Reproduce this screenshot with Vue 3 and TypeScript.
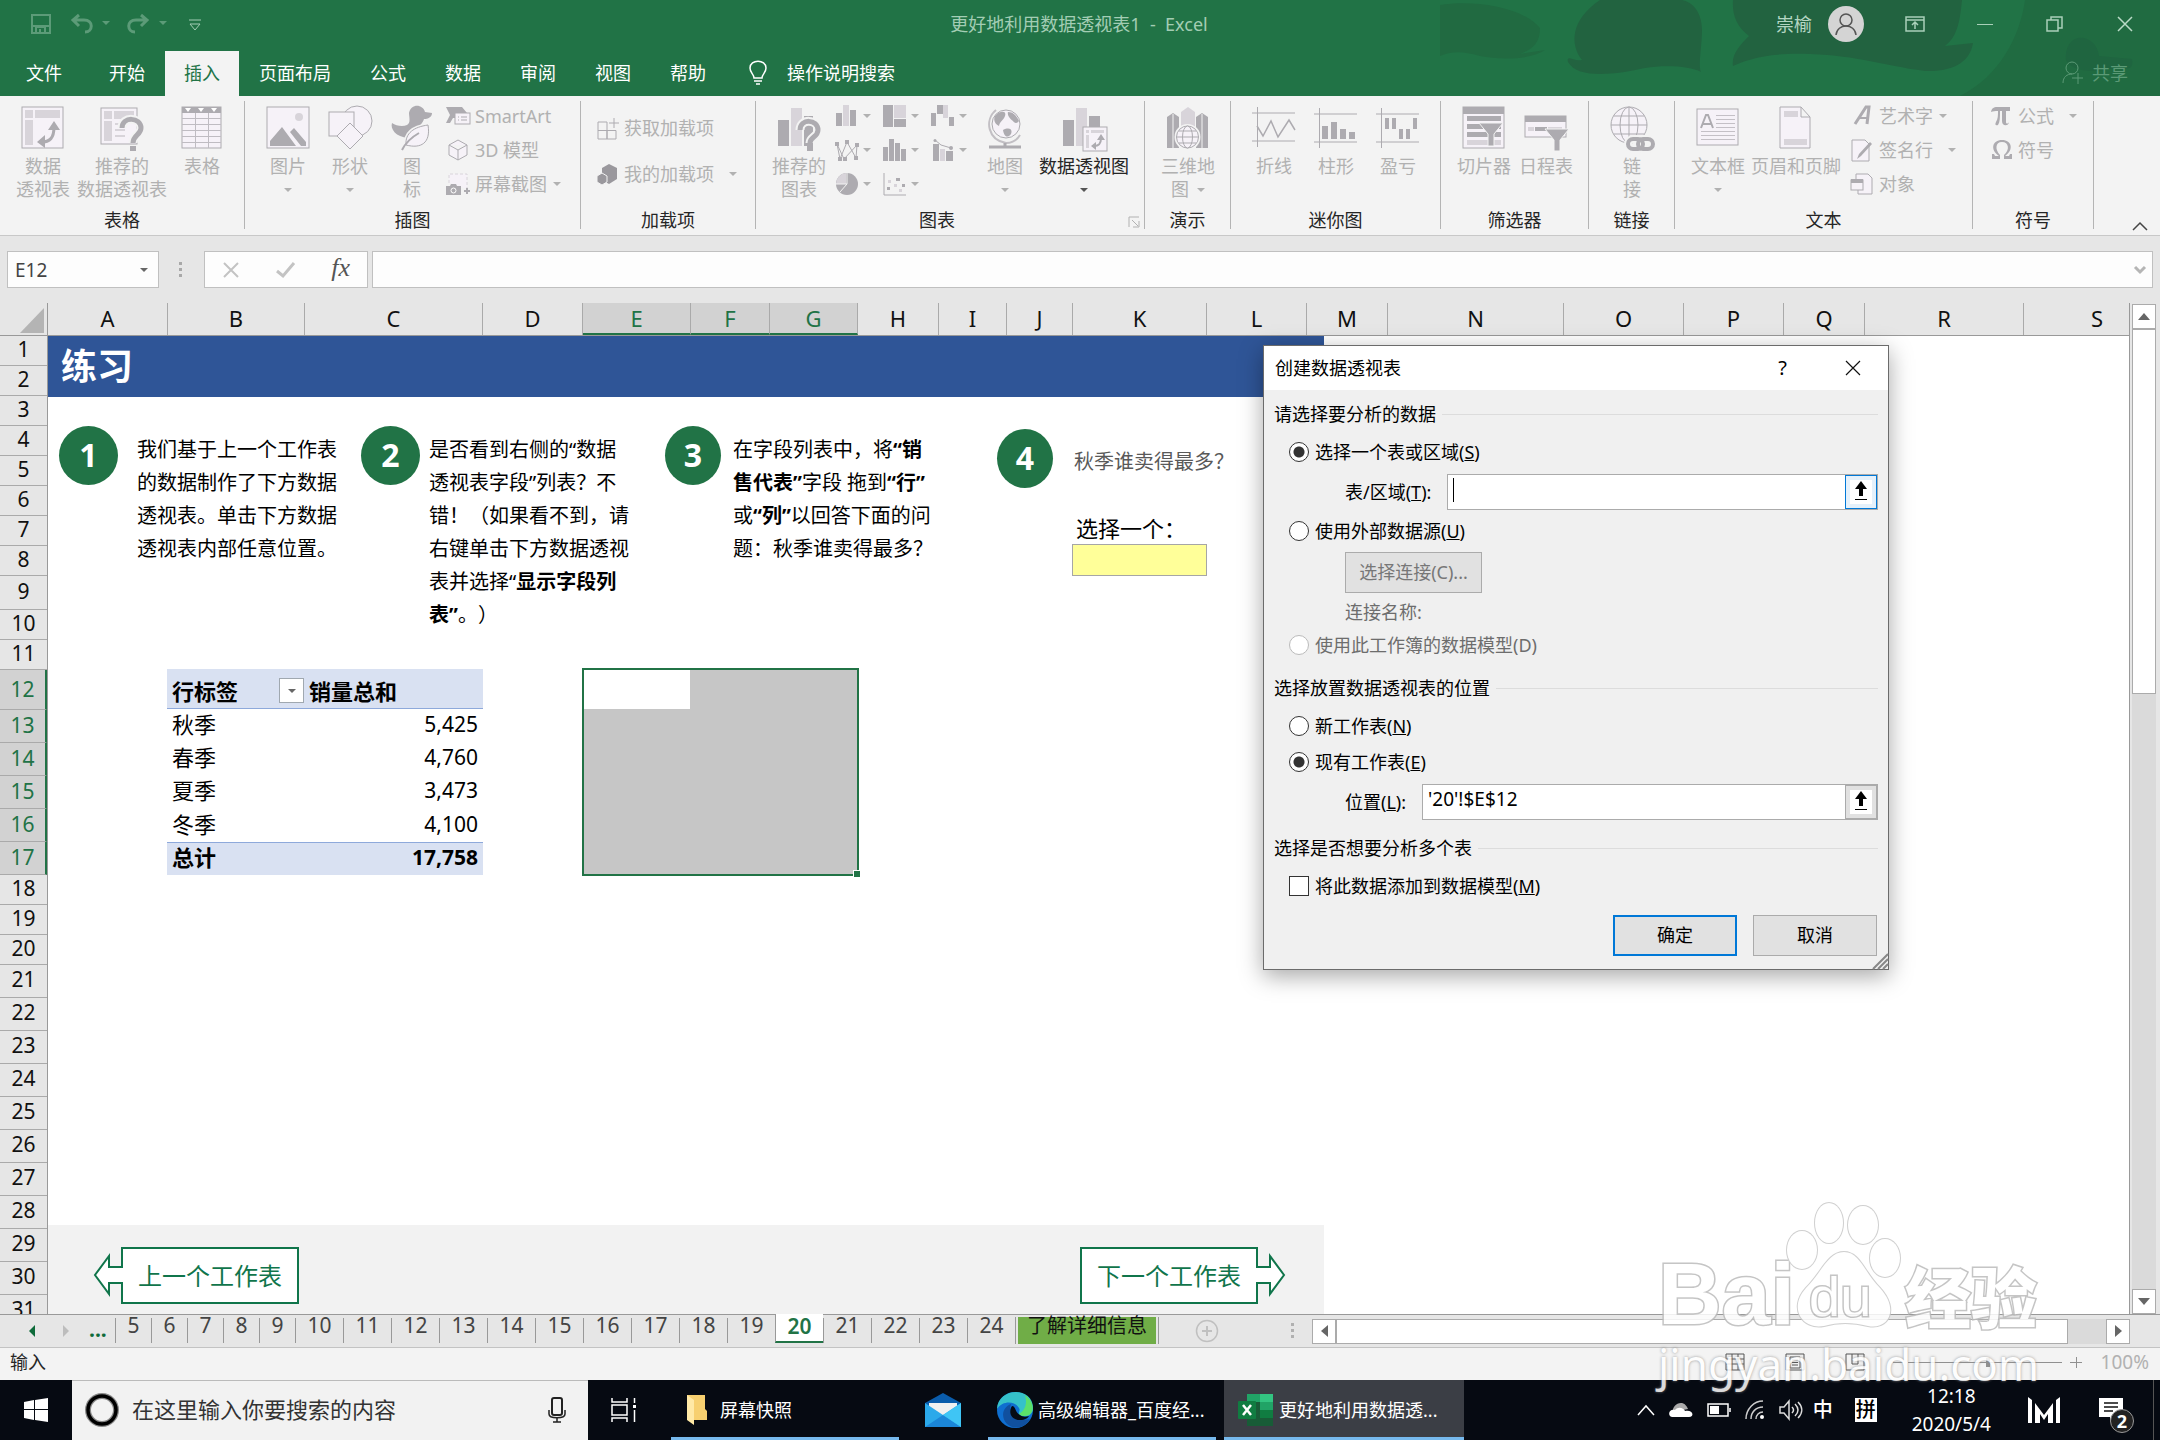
<script setup lang="ts">
import { ref } from 'vue'

interface Column { name: string; width: number; selected?: boolean }
interface Row { name: number; height: number; selected?: boolean }
interface PivotRow { label: string; value: string }

const D = '#adabb0'
const L = '#d8d4da'
const P = '#f6f2f8'

const icons: Record<string, string> = {
  pivot: `<rect x="1" y="2" width="41" height="41" fill="${P}" stroke="${D}"/><path d="M4 5h8v8H4zM14 5h25v8H14zM4 15h8v25H4z" fill="${L}"/><path d="M20 37c9 0 13-4 13-15" fill="none" stroke="${D}" stroke-width="3"/><path d="M33 16l6 9H27zM16 37l8-7v13z" fill="${D}"/>`,
  recPivot: `<rect x="1" y="3" width="36" height="36" fill="${P}" stroke="${D}"/><path d="M4 6h8v8H4zM14 6h20v8H14zM4 16h8v20H4zM15 18h8v2h-8zM15 24h10v2H15zM15 30h10v2H15z" fill="${L}"/><path d="M22 23c0-12 19-11 19 0 0 7-8 7-8 15" fill="none" stroke="#f3f3f3" stroke-width="9"/><path d="M22 23c0-12 19-11 19 0 0 7-8 7-8 15" fill="none" stroke="${D}" stroke-width="5"/><path d="M30 41h6v5h-6z" fill="${D}"/>`,
  table: `<rect x="2" y="2" width="39" height="41" fill="${P}" stroke="${D}"/><path d="M2 2h39v6H2z" fill="${D}"/><path d="M5 3h6l-3 4zM18 3h6l-3 4zM31 3h6l-3 4z" fill="#fff"/><path d="M2 13.500h39M2 19.500h39M2 25.500h39M2 31.500h39M2 37.500h39M15.500 8v35M28.500 8v35" stroke="#bfbcc2" fill="none"/>`,
  picture: `<rect x="1" y="2" width="42" height="41" fill="${P}" stroke="${D}"/><circle cx="33" cy="12" r="4" fill="${L}"/><path d="M4 41V36L16 22l14 19zM24 27l4-4 12 14v4h-5z" fill="${D}"/>`,
  shapes: `<circle cx="29" cy="16" r="15" fill="${P}" stroke="${D}"/><rect x="1" y="7" width="25" height="24" fill="${P}" stroke="${D}"/><path d="M22 18l13 13-13 13L9 31z" fill="${P}" stroke="${D}"/>`,
  duck: `<path d="M19 8c2-10 14-9 16-1l7 1c0 4-4 6-8 6-1 4-4 5-4 8-2 5-6 11-12 11C6 32 0 24 2 18c4 3 11 4 15 2 4-2 2-8 2-12z" fill="${D}"/><path d="M38 20c3 18-7 24-22 20-1-12 8-18 22-20z" fill="${P}" stroke="#f3f3f3" stroke-width="4"/><path d="M38 20c3 18-7 24-22 20-1-12 8-18 22-20z" fill="${P}" stroke="${D}"/><path d="M12 45c4-8 10-13 17-17" fill="none" stroke="${D}" stroke-width="2"/>`,
  smartart: `<path d="M0 2h16l5 6-4 5H7l-3 5H0l4-8z" fill="${D}"/><rect x="9" y="8" width="15" height="11" fill="${P}" stroke="${D}"/><path d="M12 12h1M15 12h6M12 15h1M15 15h6" stroke="${D}"/>`,
  cube: `<path d="M12 1l9 5v10l-9 5-9-5V6zM3 6l9 5 9-5M12 11v10" fill="${P}" stroke="${D}"/>`,
  screenshot: `<path d="M3 10V1h18v15" fill="${P}" stroke="${L}" stroke-dasharray="3 2"/><path d="M0 13h4l1-2h5l1 2h4v9H0z" fill="${D}"/><circle cx="7.500" cy="17.500" r="2.500" fill="none" stroke="#fff"/><path d="M21 15v6M18 18h6" stroke="${D}" stroke-width="2"/>`,
  getAddin: `<path d="M1 5h9v17H1zM1 13.500h18M10 13.500V22h9v-8.500M17 1v10M12 6h10" fill="none" stroke="${D}"/>`,
  myAddin: `<path d="M12 1l8 4v11l-8 5-7-4V5z" fill="#9a989d"/><path d="M5 10l5 3v6l-5 3-5-3v-6z" fill="#9a989d" stroke="#f3f3f3"/>`,
  recChart: `<path d="M1 15h11v26H1zM27 11h9v30h-9z" fill="${D}"/><path d="M14 3h11v38H14z" fill="${L}"/><path d="M23 25c0-12 18-11 18 0 0 7-8 7-8 13" fill="none" stroke="#f3f3f3" stroke-width="9"/><path d="M23 25c0-12 18-11 18 0 0 7-8 7-8 13" fill="none" stroke="${D}" stroke-width="5"/><path d="M30 41h6v5h-6z" fill="${D}"/>`,
  bar: `<path d="M1 8h6v13H1zM15 5h6v16h-6z" fill="${D}"/><path d="M8 0h6v21H8z" fill="${L}"/>`,
  treemap: `<path d="M0 0h10v22H0zM11 14h12v8H11z" fill="${D}"/><path d="M11 0h12v13H11z" fill="${L}"/>`,
  waterfall: `<path d="M0 8h5v13H0zM6 0h6v9H6zM18 12h5v9h-5z" fill="${D}"/><path d="M12 0h5v13h-5z" fill="${L}"/>`,
  radar: `<path d="M2 5l3 15L12 3l9 16L22 6 9 20z" fill="none" stroke="${D}"/><path d="M0 3h4v4H0zM3 18h4v4H3zM10 1h4v4h-4zM19 17h4v4h-4zM20 4h4v4h-4zM8 18h4v4H8z" fill="${D}"/>`,
  histogram: `<path d="M0 8h5v14H0zM6 0h5v22H6zM12 4h5v18h-5zM18 10h5v12h-5z" fill="${D}"/>`,
  combo: `<path d="M2 5h6v17H2zM15 12h7v10h-7z" fill="${D}"/><path d="M9 10h5v12H9z" fill="${L}"/><path d="M4 1l6 5 10 3" fill="none" stroke="${D}"/><circle cx="4" cy="1.500" r="1.500" fill="${D}"/><circle cx="20" cy="9" r="2" fill="${D}"/>`,
  pie: `<circle cx="12" cy="11" r="11" fill="${D}"/><path d="M11 11V0A11 11 0 0 0 1 11z" fill="${L}"/><path d="M12 0v11L5 19M1 11h11" stroke="#f3f3f3" fill="none"/>`,
  scatter: `<path d="M1 0v22h22" fill="none" stroke="${D}"/><path d="M13 5h4v3h-4zM4 14h3v3H4zM19 11h3v3h-3z" fill="${D}"/><path d="M5 7h3v3H5zM11 11h3v3h-3zM16 16h3v3h-3z" fill="${L}"/>`,
  globeStand: `<circle cx="23" cy="19" r="14" fill="${P}" stroke="${D}"/><path d="M13 5c-12 10-8 30 10 33 7 0 11-3 14-8" fill="none" stroke="#c2bfc4" stroke-width="2"/><path d="M12 11c4-5 12-6 10 0-2 5-5 5-6 10-4-2-6-6-4-10zM25 7c6 0 9 5 11 9-2 3-5 2-6 0-3-2-6-6-5-9zM20 25c6-3 10-1 8 4-4 5-7 2-8-4z" fill="${D}"/><path d="M22 38v4M6 42h32" stroke="${D}" stroke-width="3"/>`,
  pivotChart: `<path d="M1 15h11v26H1zM27 11h11v15H27z" fill="${D}"/><path d="M14 3h11v38H14z" fill="${L}"/><rect x="21" y="22" width="24" height="24" fill="${P}" stroke="${D}"/><path d="M24 25h3v3h-3zM29 25h13v3H29zM24 30h3v13h-3z" fill="${L}"/><path d="M32 41c5 0 7-2 7-8" fill="none" stroke="${D}" stroke-width="2"/><path d="M39 29l4 6h-8zM29 41l5-4v8z" fill="${D}"/>`,
  map3d: `<path d="M1 12l6-4 6 4v31H1zM30 12l6-4 6 4v31H30z" fill="${D}"/><path d="M15 7l7-5 7 5v20H15z" fill="${L}"/><path d="M7 9v34M36 9v34" stroke="#f3f3f3"/><circle cx="21.500" cy="32" r="13" fill="#f3f3f3"/><g fill="${P}" stroke="${D}"><circle cx="21.500" cy="32" r="11"/><ellipse cx="21.500" cy="32" rx="5" ry="11"/><path d="M10.500 32h22M13 26h17M13 38h17"/></g>`,
  line: `<path d="M0 8h43M0 36h43M5.500 2v40" fill="none" stroke="${D}"/><path d="M5 21l6 10 8-15 7 16 11-17 6 10" fill="none" stroke="${D}" stroke-width="1.500"/>`,
  column: `<path d="M0 9h43M0 37h43M5.500 3v40" fill="none" stroke="${D}"/><path d="M8 21h6v13H8zM17 17h6v17h-6zM26 24h6v10h-6zM35 27h6v7h-6z" fill="${D}"/>`,
  winloss: `<path d="M0 9h43M0 37h43M5.500 3v40" fill="none" stroke="${D}"/><path d="M9 13h4v11H9zM16 13h4v11h-4zM23 24h4v10h-4zM30 24h4v10h-4zM37 13h4v11h-4z" fill="${D}"/>`,
  slicer: `<rect x="1" y="2" width="41" height="41" fill="${P}" stroke="${D}"/><path d="M1 2h41v7H1zM5 11h34v5H5zM5 19h34v5H5zM5 27h34v5H5z" fill="${D}"/><path d="M5 35h34v5H5z" fill="${L}"/><path d="M17 18h24l-9 11v12h-6V29z" fill="${D}" stroke="#f3f3f3"/>`,
  timeline: `<rect x="1" y="11" width="41" height="21" fill="${P}" stroke="${D}"/><path d="M1 11h41v6H1zM11 22h12v4H11z" fill="${D}"/><path d="M4 22h6v4H4zM24 22h14v4H24z" fill="${L}"/><path d="M21 24h24l-9 11v11h-6V35z" fill="${D}" stroke="#f3f3f3"/>`,
  link: `<g fill="${P}" stroke="${D}"><circle cx="19" cy="20" r="18"/><ellipse cx="19" cy="20" rx="9" ry="18"/><path d="M1 20h36M4 11h30M4 29h30M19 2v36"/></g><g fill="none" stroke="#f3f3f3" stroke-width="8"><rect x="18" y="34" width="15" height="10" rx="5"/><rect x="28" y="34" width="15" height="10" rx="5"/></g><g fill="none" stroke="${D}" stroke-width="4"><rect x="18" y="34" width="15" height="10" rx="5"/><rect x="28" y="34" width="15" height="10" rx="5"/></g>`,
  textbox: `<rect x="1" y="4" width="41" height="36" fill="${P}" stroke="${D}"/><path d="M5 23l5-13h2l5 13M7 19h8" fill="none" stroke="${D}" stroke-width="2"/><path d="M20 10.500h19M20 14.500h19M20 18.500h19M20 22.500h19M5 26.500h34M5 30.500h34M5 34.500h34" stroke="#c4c0c6"/>`,
  headerFooter: `<path d="M6 2h21l9 10v31H6zM27 2v10h9" fill="${P}" stroke="${D}"/><path d="M10 6h14v6H10zM10 34h23v6H10z" fill="${L}"/>`,
  wordart: `<path d="M5 19L16 2h3l-2 17" fill="none" stroke="${D}" stroke-width="3"/><path d="M9 13h9" stroke="${D}" stroke-width="2"/>`,
  sign: `<path d="M2 1h13l4 4v17H2z" fill="${P}" stroke="${D}"/><path d="M22 5L11 17l-4 3 2-5L20 3z" fill="${D}"/>`,
  object: `<path d="M6 6V1h12l4 4v16H8v-4" fill="${P}" stroke="${D}"/><rect x="1" y="7" width="12" height="10" fill="${P}" stroke="${D}"/><path d="M1 6h12v4H1z" fill="${D}"/>`,
  pi: `<path d="M0 7c1-5 4-5 7-5h12v4h-4v11c0 2 2 2 3 0 0 4-7 5-7-1V6H9c0 6 0 11-2 14-3 1-3-1-2-3 2-3 2-7 2-11-3 0-5 0-7 1z" fill="${D}"/>`,
  omega: `<path d="M1 20v-5h2l1 2h4C-1 11 1 1 11 1s12 10 3 16h4l1-2h2v5h-8v-4c6-5 5-13-2-13S4 11 9 16v4z" fill="${D}"/>`,
}

const tabs = ['文件', '开始', '插入', '页面布局', '公式', '数据', '审阅', '视图', '帮助']
const miniCharts = ['bar', 'treemap', 'waterfall', 'radar', 'histogram', 'combo', 'pie', 'scatter']

const columns: Column[] = [
  ['A', 120], ['B', 137], ['C', 178], ['D', 100], ['E', 108], ['F', 79], ['G', 88], ['H', 81], ['I', 68],
  ['J', 66], ['K', 134], ['L', 100], ['M', 81], ['N', 176], ['O', 120], ['P', 100], ['Q', 81], ['R', 159], ['S', 147],
].map(([name, width]) => ({ name: String(name), width: Number(width), selected: 'EFG'.includes(String(name)) }))

const rowHeight = (n: number): number => {
  if (n === 9) return 34
  if (n === 12) return 40
  return n < 12 || (n > 17 && n < 21) ? 30 : 33
}
const rows: Row[] = Array.from({ length: 31 }, (_, i) => ({
  name: i + 1, height: rowHeight(i + 1), selected: i + 1 >= 12 && i + 1 <= 17,
}))

const pivotRows: PivotRow[] = [
  { label: '秋季', value: '5,425' },
  { label: '春季', value: '4,760' },
  { label: '夏季', value: '3,473' },
  { label: '冬季', value: '4,100' },
]
const sheets = Array.from({ length: 20 }, (_, i) => i + 5)
const activeSheet = ref(20)
const source = ref('range')
const place = ref('existing')
const location = ref("'20'!$E$12")
const range = ref('')
const cellName = ref('E12')
const addToModel = ref(false)
</script>

<template>
  <div class="app">
    <header class="top">
      <svg class="art" width="720" height="96" viewBox="0 0 720 96" aria-hidden="true">
        <path d="M585 0h135v96H520c40-20 60-60 65-96z" fill="#206b41" />
        <path d="M0 5C30 0 80 5 100 28c0 17-10 22-20 26l25-4c-15 10-45 10-65 6-20-6-30-4-40 0z" fill="#216a41" />
        <path d="M160 0c-30 20-30 45-18 60-8 2-16-6-14 2 10 18 50 12 77 6 20-3 45-2 56 4-3-6 1-27 1-42 0-20-12-30-22-30z" fill="#226340" />
        <path d="M293 0h229c-2 20-4 36-17 46l28-3c-3 18-18 29-48 28-45-6-65-15-115-17-40-2-65 6-77 12-2-12 8-22 16-30-13-10-17-22-16-36z" fill="#226340" />
        <path d="M626 60c-2-30 30-28 33-4l33 3c2 12-6 10-14 8-20 6-46 6-52-7z" fill="#1f6540" />
      </svg>
      <div class="title">
        <div class="quick">
          <button aria-label="保存"><svg width="20" height="20" viewBox="0 0 20 20"><path d="M1 1h18v18H1zM1 12h18M5 19v-6h9v6M9 15v3" fill="none" stroke="#5c9b78" stroke-width="2" /></svg></button>
          <button aria-label="撤消"><svg width="36" height="20" viewBox="0 0 36 20"><path d="M2 6h11c10 0 9 12 1 12M8 1L2 6l6 6" fill="none" stroke="#5c9b78" stroke-width="3" /><path d="M31 7h8l-4 4z" fill="#5c9b78" /></svg></button>
          <button aria-label="恢复"><svg width="42" height="20" viewBox="0 0 42 20"><path d="M20 6H9c-10 0-9 12-1 12M14 1l6 5-6 6" fill="none" stroke="#5c9b78" stroke-width="3" /><path d="M32 7h8l-4 4z" fill="#5c9b78" /></svg></button>
          <button aria-label="自定义快速访问工具栏"><svg width="12" height="12" viewBox="0 0 12 12"><path d="M0 2h12M1 6h10l-5 6z" fill="none" stroke="#a3cdb4" /></svg></button>
        </div>
        <div class="doc">更好地利用数据透视表1&nbsp; -&nbsp; Excel</div>
        <div class="account">
          <span>崇榆</span>
          <svg class="avatar" width="36" height="36" viewBox="0 0 36 36"><circle cx="18" cy="18" r="18" fill="#d4d4d4" /><circle cx="18" cy="14" r="6" fill="none" stroke="#555" stroke-width="1.500" /><path d="M8 29c1-12 19-12 20 0" fill="none" stroke="#555" stroke-width="1.500" /></svg>
          <button aria-label="功能区显示选项"><svg width="20" height="16" viewBox="0 0 20 16"><path d="M1 1h18v14H1zM1 4h18M10 13V7M7 9l3-3 3 3" fill="none" stroke="#a9d0b9" stroke-width="1.500" /></svg></button>
          <button aria-label="最小化"><svg width="20" height="16" viewBox="0 0 20 16"><path d="M2 8.500h16" stroke="#a9d0b9" /></svg></button>
          <button aria-label="还原"><svg width="20" height="16" viewBox="0 0 20 16"><path d="M2 4h11v11H2zM6 4V1h11v11h-4" fill="none" stroke="#a9d0b9" stroke-width="1.500" /></svg></button>
          <button aria-label="关闭"><svg width="20" height="16" viewBox="0 0 20 16"><path d="M3 1l14 14M17 1L3 15" stroke="#b9dac6" stroke-width="1.500" /></svg></button>
        </div>
      </div>
      <nav class="tabs">
        <button v-for="t in tabs" :key="t" :class="{ on: t === '插入' }">{{ t }}</button>
        <button class="tell">
          <svg width="18" height="26" viewBox="0 0 18 26"><path d="M5 18c0-4-4-5-4-10 0-9 16-9 16 0 0 5-4 6-4 10zM5 21h8M7 24h4" fill="none" stroke="#fff" stroke-width="1.500" /></svg>
          操作说明搜索
        </button>
        <button class="share">
          <svg width="22" height="24" viewBox="0 0 22 24"><circle cx="10" cy="7" r="6" fill="none" stroke="#5b9a76" /><path d="M1 22c0-6 4-9 9-9M16 12v11M10 17h11" fill="none" stroke="#5b9a76" /></svg>
          共享
        </button>
      </nav>
    </header>

    <section class="ribbon">
      <div class="group g-tables">
        <div class="items">
          <button class="big"><svg v-html="icons.pivot" /><span>数据<br />透视表</span></button>
          <button class="big"><svg v-html="icons.recPivot" /><span>推荐的<br />数据透视表</span></button>
          <button class="big"><svg v-html="icons.table" /><span>表格</span></button>
        </div>
        <div class="name">表格</div>
      </div>
      <div class="group g-illus">
        <div class="items">
          <button class="big"><svg v-html="icons.picture" /><span>图片</span><i class="dd" /></button>
          <button class="big"><svg v-html="icons.shapes" /><span>形状</span><i class="dd" /></button>
          <button class="big"><svg v-html="icons.duck" /><span>图<br />标</span></button>
          <div class="stack">
            <button class="small"><svg v-html="icons.smartart" />SmartArt</button>
            <button class="small"><svg v-html="icons.cube" />3D 模型</button>
            <button class="small"><svg v-html="icons.screenshot" />屏幕截图<i class="dd" /></button>
          </div>
        </div>
        <div class="name">插图</div>
      </div>
      <div class="group g-addins">
        <div class="items">
          <div class="stack wide">
            <button class="small"><svg v-html="icons.getAddin" />获取加载项</button>
            <button class="small"><svg v-html="icons.myAddin" />我的加载项<i class="dd far" /></button>
          </div>
        </div>
        <div class="name">加载项</div>
      </div>
      <div class="group g-charts">
        <div class="items">
          <button class="big"><svg v-html="icons.recChart" /><span>推荐的<br />图表</span></button>
          <div class="minis">
            <button v-for="m in miniCharts" :key="m" :aria-label="m"><svg v-html="icons[m]" /><i class="dd" /></button>
          </div>
          <button class="big"><svg v-html="icons.globeStand" /><span>地图</span><i class="dd" /></button>
          <button class="big live"><svg v-html="icons.pivotChart" /><span>数据透视图</span><i class="dd" /></button>
        </div>
        <div class="name">图表</div>
        <svg class="launcher" width="12" height="12" viewBox="0 0 12 12"><path d="M1 11V1h10M4 4l6 6M11 5v6H5" fill="none" stroke="#b1b1b1" /></svg>
      </div>
      <div class="group g-tour">
        <div class="items">
          <button class="big"><svg v-html="icons.map3d" /><span>三维地<br />图<i class="dd inline" /></span></button>
        </div>
        <div class="name">演示</div>
      </div>
      <div class="group g-spark">
        <div class="items">
          <button class="big"><svg v-html="icons.line" /><span>折线</span></button>
          <button class="big"><svg v-html="icons.column" /><span>柱形</span></button>
          <button class="big"><svg v-html="icons.winloss" /><span>盈亏</span></button>
        </div>
        <div class="name">迷你图</div>
      </div>
      <div class="group g-filter">
        <div class="items">
          <button class="big"><svg v-html="icons.slicer" /><span>切片器</span></button>
          <button class="big"><svg v-html="icons.timeline" /><span>日程表</span></button>
        </div>
        <div class="name">筛选器</div>
      </div>
      <div class="group g-link">
        <div class="items">
          <button class="big"><svg v-html="icons.link" /><span>链<br />接</span></button>
        </div>
        <div class="name">链接</div>
      </div>
      <div class="group g-text">
        <div class="items">
          <button class="big"><svg v-html="icons.textbox" /><span>文本框</span><i class="dd" /></button>
          <button class="big"><svg v-html="icons.headerFooter" /><span>页眉和页脚</span></button>
          <div class="stack">
            <button class="small"><svg v-html="icons.wordart" />艺术字<i class="dd" /></button>
            <button class="small"><svg v-html="icons.sign" />签名行<i class="dd far" /></button>
            <button class="small"><svg v-html="icons.object" />对象</button>
          </div>
        </div>
        <div class="name">文本</div>
      </div>
      <div class="group g-symbol">
        <div class="items">
          <div class="stack">
            <button class="small"><svg v-html="icons.pi" />公式<i class="dd far" /></button>
            <button class="small"><svg v-html="icons.omega" />符号</button>
          </div>
        </div>
        <div class="name">符号</div>
      </div>
      <button class="collapse" aria-label="折叠功能区"><svg width="16" height="10" viewBox="0 0 16 10"><path d="M1 9l7-7 7 7" fill="none" stroke="#444" stroke-width="1.500" /></svg></button>
    </section>

    <section class="formula">
      <div class="namebox"><input v-model="cellName" aria-label="名称框" /><i class="dd dark" /></div>
      <svg class="grip" width="4" height="16" viewBox="0 0 4 16"><path d="M0 0h3v3H0zM0 6h3v3H0zM0 12h3v3H0z" fill="#a8a8a8" /></svg>
      <div class="fxbox">
        <button aria-label="取消"><svg width="18" height="18" viewBox="0 0 18 18"><path d="M2 2l14 14M16 2L2 16" stroke="#c3c3c3" stroke-width="2" /></svg></button>
        <button aria-label="输入"><svg width="20" height="18" viewBox="0 0 20 18"><path d="M1 10l6 5L18 2" fill="none" stroke="#c3c3c3" stroke-width="3" /></svg></button>
        <button class="fx">fx</button>
      </div>
      <div class="fbox">
        <input aria-label="编辑栏" />
        <svg width="12" height="8" viewBox="0 0 12 8"><path d="M1 1l5 5 5-5" fill="none" stroke="#b5b5b5" stroke-width="3" /></svg>
      </div>
    </section>

    <main class="sheet">
      <div class="grid">
        <div class="colheads">
          <div class="corner"><svg width="26" height="26" viewBox="0 0 26 26"><path d="M25 1v25H1z" fill="#b4b4b4" /></svg></div>
          <div v-for="c in columns" :key="c.name" class="col" :class="{ sel: c.selected }" :style="{ width: c.width + 'px' }">{{ c.name }}</div>
        </div>
        <div class="body">
          <div class="rowheads">
            <div v-for="r in rows" :key="r.name" class="row" :class="{ sel: r.selected }" :style="{ height: r.height + 'px' }">{{ r.name }}</div>
          </div>
          <div class="cells">
            <h1>练习</h1>
            <div class="steps">
              <div class="step">
                <b class="num">1</b>
                <p>我们基于上一个工作表<br />的数据制作了下方数据<br />透视表。单击下方数据<br />透视表内部任意位置。</p>
              </div>
              <div class="step">
                <b class="num">2</b>
                <p>是否看到右侧的“数据<br />透视表字段”列表？不<br />错！（如果看不到，请<br />右键单击下方数据透视<br />表并选择“<b>显示字段列<br />表”</b>。）</p>
              </div>
              <div class="step">
                <b class="num">3</b>
                <p>在字段列表中，将<b>“销<br />售代表”</b>字段 拖到<b>“行”</b><br />或<b>“列”</b>以回答下面的问<br />题：秋季谁卖得最多？</p>
              </div>
              <div class="step">
                <b class="num">4</b>
                <div class="quiz">
                  <p>秋季谁卖得最多？</p>
                  <label for="answer">选择一个：</label>
                  <input id="answer" />
                </div>
              </div>
            </div>
            <div class="data">
              <table class="pivot">
                <thead>
                  <tr>
                    <th><div class="th">行标签<button aria-label="筛选"><i class="dd dark" /></button></div></th>
                    <th>销量总和</th>
                  </tr>
                </thead>
                <tbody>
                  <tr v-for="r in pivotRows" :key="r.label"><td>{{ r.label }}</td><td>{{ r.value }}</td></tr>
                </tbody>
                <tfoot>
                  <tr><td>总计</td><td>17,758</td></tr>
                </tfoot>
              </table>
              <div class="selection"><div class="active" /><span class="handle" /></div>
            </div>
            <div class="band">
              <a href="#prev" class="go">
                <svg width="30" height="44" viewBox="0 0 30 44"><path d="M30 14H16V3L2 22l14 19V30h14" fill="#fff" stroke="#10754b" stroke-width="2" /></svg>
                <span>上一个工作表</span>
              </a>
              <a href="#next" class="go next">
                <span>下一个工作表</span>
                <svg width="30" height="44" viewBox="0 0 30 44"><path d="M0 14h14V3l14 19-14 19V30H0" fill="#fff" stroke="#10754b" stroke-width="2" /></svg>
              </a>
            </div>
          </div>
        </div>
      </div>
      <div class="vscroll">
        <button aria-label="向上"><svg width="12" height="7" viewBox="0 0 12 7"><path d="M0 7l6-7 6 7z" fill="#666" /></svg></button>
        <div class="vtrack"><div class="vthumb" /></div>
        <button aria-label="向下"><svg width="12" height="7" viewBox="0 0 12 7"><path d="M0 0h12L6 7z" fill="#666" /></svg></button>
      </div>
    </main>

    <nav class="sheettabs">
      <div class="nav">
        <svg width="40" height="12" viewBox="0 0 40 12"><path d="M6 0v12L0 6z" fill="#0e6b3a" /><path d="M34 0v12l6-6z" fill="#bdbdbd" /></svg>
        <b>...</b>
      </div>
      <button v-for="s in sheets" :key="s" :class="{ on: s === activeSheet, one: s < 10 }" @click="activeSheet = s">{{ s }}</button>
      <button class="info"><span>了解详细信息</span></button>
      <svg class="plus" width="24" height="24" viewBox="0 0 24 24"><circle cx="12" cy="12" r="10.500" fill="none" stroke="#c0c0c0" stroke-width="1.500" /><path d="M12 7v10M7 12h10" stroke="#c0c0c0" stroke-width="2" /></svg>
      <div class="hscroll">
        <svg class="grip" width="4" height="16" viewBox="0 0 4 16"><path d="M0 0h3v3H0zM0 6h3v3H0zM0 12h3v3H0z" fill="#b0b0b0" /></svg>
        <button aria-label="向左"><svg width="7" height="12" viewBox="0 0 7 12"><path d="M7 0v12L0 6z" fill="#666" /></svg></button>
        <div class="htrack"><div class="hthumb" /></div>
        <button aria-label="向右"><svg width="7" height="12" viewBox="0 0 7 12"><path d="M0 0v12l7-6z" fill="#666" /></svg></button>
      </div>
    </nav>

    <footer class="status">
      <span>输入</span>
      <div class="views">
        <svg width="20" height="18" viewBox="0 0 20 18"><path d="M1 1h18v16H1zM1 6h18M1 11h18M7 1v16M13 1v16" fill="none" stroke="#555" /></svg>
        <svg width="20" height="18" viewBox="0 0 20 18"><path d="M1 1h18v16H1zM5 4h10v11H5zM7 7h6M7 9.500h6M7 12h6" fill="none" stroke="#555" /></svg>
        <svg width="20" height="18" viewBox="0 0 20 18"><path d="M1 1h18v16H1zM7 1v10h6V1" fill="none" stroke="#555" /></svg>
      </div>
      <svg class="zoom" width="190" height="16" viewBox="0 0 190 16"><path d="M0 8.500h10M15 8.500h154M177 8.500h12M183.500 3v11" stroke="#909090" /><path d="M93 4h4v9h-4z" fill="#909090" /></svg>
      <span class="pct">100%</span>
    </footer>

    <footer class="taskbar">
      <button class="start" aria-label="开始菜单"><svg width="24" height="24" viewBox="0 0 24 24"><path d="M0 4l10-2v9H0zM11 2l13-2v11H11zM0 12h10v10L0 20zM11 12h13v12l-13-2z" fill="#fff" /></svg></button>
      <div class="search">
        <svg width="34" height="34" viewBox="0 0 34 34"><circle cx="17" cy="17" r="14" fill="none" stroke="#888" stroke-width="6" /><circle cx="17" cy="17" r="14" fill="none" stroke="#000" stroke-width="3.500" /></svg>
        <input aria-label="搜索" placeholder="在这里输入你要搜索的内容" />
        <svg width="18" height="26" viewBox="0 0 18 26"><rect x="4" y="1" width="10" height="17" rx="2" fill="none" stroke="#222" stroke-width="2" /><path d="M1 13v4c0 5 16 5 16 0v-4M9 21v4M5 25h8" fill="none" stroke="#222" stroke-width="1.500" /></svg>
      </div>
      <button class="taskview" aria-label="任务视图"><svg width="26" height="24" viewBox="0 0 26 24"><path d="M1 0v4h15V0M1 24v-4h15v4M1 7h15v10H1zM23.500 0v5M23.500 12v12" fill="none" stroke="#fff" stroke-width="1.500" /><path d="M22 7h3v3h-3z" fill="#fff" /></svg></button>
      <button class="app-btn folder">
        <svg width="22" height="32" viewBox="0 0 22 32"><path d="M1 1h18v14l2 2v9H1z" fill="#f7d070" /><path d="M1 1l7 5v25l-7-5z" fill="#ffe9a6" /></svg>
        屏幕快照
      </button>
      <button class="mail" aria-label="邮件"><svg width="36" height="34" viewBox="0 0 36 34"><path d="M0 10L18 0l18 10v6H0z" fill="#0a5cab" /><path d="M4 10h28v12H4z" fill="#f0f0f0" /><path d="M0 10l18 12L36 10v24H0z" fill="#2ba9ea" /><path d="M0 34l18-12 18 12z" fill="#1b86d8" /><path d="M18 22l18-12v24z" fill="#3fc5f5" /></svg></button>
      <button class="app-btn edge">
        <svg width="36" height="36" viewBox="0 0 36 36"><circle cx="18" cy="18" r="18" fill="#0f6fd0" /><path d="M0 17C1-5 36-6 36 16c0 8-8 10-13 7-3-2 1-4-1-7-4-7-16-8-22 1z" fill="#35c1c9" /><path d="M28 3c9 6 10 17 4 20-4 2-9 1-10-1 5-3 9-9 6-19z" fill="#5be06a" /><path d="M33 27c-4 8-15 12-23 5-7-8-4-17 4-20-3 9 3 18 19 15z" fill="#10509f" /><path d="M23 23c-5-2-4-9-8-9-4 6-1 14 8 14 5 0 8-2 9-4-3 1-7 1-9-1z" fill="#060a14" /></svg>
        高级编辑器_百度经...
      </button>
      <button class="app-btn excel">
        <svg width="36" height="32" viewBox="0 0 36 32"><path d="M9 0h26v32H9z" fill="#21a366" /><path d="M22 0h13v8H22z" fill="#33c481" /><path d="M9 8h13v8H9zM9 16h13v16H9z" fill="#185c37" /><path d="M22 16h13v8H22z" fill="#107c41" /><path d="M22 24h13v8H22z" fill="#185c37" /><rect x="0" y="7" width="18" height="18" rx="1" fill="#107c41" /><path d="M5 11l8 10M13 11L5 21" stroke="#fff" stroke-width="2.500" /></svg>
        更好地利用数据透...
      </button>
      <div class="tray">
        <svg width="18" height="12" viewBox="0 0 18 12"><path d="M1 11l8-9 8 9" fill="none" stroke="#fff" stroke-width="1.500" /></svg>
        <svg width="24" height="16" viewBox="0 0 24 16"><path d="M4 10C2 4 14-5 19 7z" fill="#aaa" /><path d="M3 15c-5-1-3-9 3-7 3-4 9-2 10 1 8-2 10 6 4 6z" fill="#fff" /></svg>
        <svg width="24" height="14" viewBox="0 0 24 14"><path d="M1 1h20v12H1zM23 5v4" fill="none" stroke="#fff" stroke-width="1.500" /><path d="M3 3h9v8H3z" fill="#fff" /></svg>
        <svg width="20" height="20" viewBox="0 0 20 20"><path d="M1 19C1 9 9 1 18 1M6 19c0-7 5-12 12-12M11 19c0-4 3-7 7-7" fill="none" stroke="#ccc" stroke-width="1.500" /><circle cx="17" cy="17" r="2" fill="#fff" /></svg>
        <svg width="24" height="20" viewBox="0 0 24 20"><path d="M1 7h4l5-6v18l-5-6H1zM13 7c2 2 2 4 0 6M16 4c4 4 4 8 0 12M19 2c5 5 5 11 0 16" fill="none" stroke="#ddd" stroke-width="1.500" /></svg>
        <b>中</b>
        <b class="ime">拼</b>
        <div class="clock"><span>12:18</span><span>2020/5/4</span></div>
        <svg width="32" height="26" viewBox="0 0 32 26"><path d="M0 0l4 3v23H0zM32 0l-4 3v23h4zM7 26V6l9 12 9-12v20h-5v-9l-4 6-4-6v9z" fill="#fff" /></svg>
        <div class="notice">
          <svg width="24" height="24" viewBox="0 0 24 24"><path d="M0 0h24v19h-9l-4 5v-5H0z" fill="#fff" /><path d="M5 5h14M5 9h14M5 13h9" stroke="#111" stroke-width="1.500" /></svg>
          <span>2</span>
        </div>
      </div>
    </footer>

    <form class="dialog" role="dialog" @submit.prevent>
      <div class="dtitle">
        <span>创建数据透视表</span>
        <button type="button">?</button>
        <button type="button" aria-label="关闭"><svg width="16" height="16" viewBox="0 0 16 16"><path d="M1 1l14 14M15 1L1 15" stroke="#111" stroke-width="1.200" /></svg></button>
      </div>
      <div class="dbody">
        <div class="legend">请选择要分析的数据</div>
        <label class="opt"><input v-model="source" type="radio" name="source" value="range" /><span>选择一个表或区域(<u>S</u>)</span></label>
        <div class="field">
          <label for="range">表/区域(<u>T</u>):</label>
          <div class="ref range">
            <span class="caret" />
            <input id="range" v-model="range" />
            <button type="button" class="hot" aria-label="选择区域"><svg width="22" height="24" viewBox="0 0 22 24"><path d="M0 0h22v24H0z" fill="#fff" /><path d="M11 1l6 8h-4v7H9V9H5zM5 19h12v1H5z" /></svg></button>
          </div>
        </div>
        <label class="opt"><input v-model="source" type="radio" name="source" value="external" /><span>使用外部数据源(<u>U</u>)</span></label>
        <button type="button" class="connect" disabled>选择连接(C)...</button>
        <div class="conn">连接名称:</div>
        <label class="opt off"><input v-model="source" type="radio" name="source" value="model" disabled /><span>使用此工作簿的数据模型(D)</span></label>
        <div class="legend second">选择放置数据透视表的位置</div>
        <label class="opt"><input v-model="place" type="radio" name="place" value="new" /><span>新工作表(<u>N</u>)</span></label>
        <label class="opt tight"><input v-model="place" type="radio" name="place" value="existing" /><span>现有工作表(<u>E</u>)</span></label>
        <div class="field loc">
          <label for="location">位置(<u>L</u>):</label>
          <div class="ref">
            <input id="location" v-model="location" />
            <button type="button" aria-label="选择位置"><svg width="22" height="24" viewBox="0 0 22 24"><path d="M0 0h22v24H0z" fill="#fff" /><path d="M11 1l6 8h-4v7H9V9H5zM5 19h12v1H5z" /></svg></button>
          </div>
        </div>
        <div class="legend third">选择是否想要分析多个表</div>
        <label class="opt"><input v-model="addToModel" type="checkbox" /><span>将此数据添加到数据模型(<u>M</u>)</span></label>
        <div class="actions">
          <button type="submit" class="ok">确定</button>
          <button type="button">取消</button>
        </div>
      </div>
      <svg class="resize" width="15" height="15" viewBox="0 0 15 15"><path d="M0 15L15 0M5 15L15 5M10 15l5-5" stroke="#888" stroke-width="2" /></svg>
    </form>

    <div class="mark" aria-hidden="true">
      <div class="logo">
        <span class="bai">Bai</span>
        <div class="paw">
          <svg width="116" height="130" viewBox="0 0 116 130">
            <g fill="#fff" stroke="#c8c8c8" stroke-width="2"><ellipse cx="42" cy="22" rx="14" ry="20" /><ellipse cx="76" cy="24" rx="15" ry="19" /><ellipse cx="15" cy="49" rx="15" ry="19" /><ellipse cx="98" cy="57" rx="15" ry="19" /><path d="M57 51c16 0 20 20 36 36 20 22 8 42-12 38-16-4-30-4-44 0-22 4-36-18-18-38 16-16 22-36 38-36z" /></g>
          </svg>
          <span>du</span>
        </div>
        <span class="jy">经验</span>
      </div>
      <div class="url">jingyan.baidu.com</div>
    </div>
  </div>
</template>

<style>
body { margin: 0; overflow: hidden; }
</style>

<style scoped>
.app { position: relative; display: flex; flex-direction: column; height: 100vh; overflow: hidden; background: #e6e6e6; color: #262626; font: 18px/24px "Noto Sans", "Noto Sans CJK SC", sans-serif; text-spacing-trim: space-all; }
.app * { box-sizing: border-box; }
button { padding: 0; border: 0; background: none; color: inherit; font: inherit; }
input { min-width: 0; margin: 0; padding: 0; border: 0; outline: 0; background: none; color: inherit; font: inherit; }
svg { display: block; flex: none; overflow: visible; }
.dd { flex: none; width: 0; height: 0; border: 4px solid transparent; border-top-color: #b1b1b1; border-bottom: 0; }
.dd.dark { border-top-color: #666; }

/* title bar and tabs */
.top { position: relative; flex: none; height: 96px; background: #217346; }
.art { position: absolute; right: 0; top: 0; }
.title { position: relative; display: flex; align-items: center; height: 51px; padding-bottom: 4px; }
.quick { display: flex; flex: 1; align-items: center; gap: 20px; padding-left: 31px; }
.doc { margin-right: 8px; color: #a3cdb4; white-space: nowrap; }
.account { display: flex; flex: 1; align-items: center; justify-content: flex-end; gap: 50px; padding-right: 25px; color: #b5d6c3; }
.account .avatar { margin: 0 -9px 0 -34px; }
.tabs { position: relative; display: flex; gap: 1px; height: 45px; padding-left: 7px; color: #fff; }
.tabs button { padding: 0 19px 2px; }
.tabs button:nth-child(2) { margin-left: 8px; }
.tabs .on { background: #f3f3f3; color: #217346; }
.tabs .tell { display: flex; align-items: center; gap: 20px; padding-left: 23px; }
.tabs .share { display: flex; align-items: center; gap: 8px; margin-left: auto; padding-right: 32px; color: #5b9a76; }

/* ribbon */
.ribbon { position: relative; display: flex; flex: none; height: 140px; padding-top: 5px; border-bottom: 1px solid #c8c8c8; background: #f3f3f3; }
.group { position: relative; display: flex; flex: none; flex-direction: column; height: 128px; border-right: 1px solid #b4b4b4; color: #b1b1b1; }
.items { display: flex; flex: none; height: 107px; }
.name { color: #262626; line-height: 24px; text-align: center; }
.big { display: flex; flex: none; flex-direction: column; align-items: center; width: 62px; padding-top: 4px; line-height: 23px; white-space: nowrap; }
.big > svg { width: 44px; height: 46px; margin-bottom: 4px; }
.big > .dd { margin-top: 10px; }
.big.live { color: #262626; }
.big.live .dd { border-top-color: #555; }
.stack { display: flex; flex-direction: column; }
.small { display: flex; align-items: center; height: 34px; padding-bottom: 4px; white-space: nowrap; }
.small svg { width: 24px; height: 22px; margin-right: 5px; }
.small .dd { margin-left: 6px; }
.small .dd.far { margin-left: 15px; }
.stack.wide { padding: 6px 0 0 16px; }
.stack.wide .small { height: 46px; }
.stack.wide svg { width: 22px; }
.g-tables { width: 245px; }
.g-tables .items { padding-left: 6px; }
.g-tables .big { width: 74px; }
.g-tables .big:nth-child(2) { width: 84px; }
.g-tables .big:nth-child(3) { width: 76px; }
.g-illus { width: 336px; }
.g-illus .items { padding-left: 12px; }
.g-illus .stack { margin-left: 3px; }
.g-addins { width: 175px; }
.g-charts { width: 389px; }
.g-charts .items { padding-left: 7px; }
.g-charts .name { padding-right: 26px; }
.g-charts .big { width: 72px; }
.g-charts .minis ~ .big { width: 52px; }
.g-charts .minis ~ .live { width: 106px; }
.minis { display: grid; grid-template-columns: repeat(3, 48px); grid-auto-rows: 34px; }
.minis button { display: flex; align-items: center; gap: 4px; padding-bottom: 4px; }
.minis svg { width: 24px; height: 22px; }
.launcher { position: absolute; right: 4px; bottom: 1px; }
.g-tour { width: 86px; }
.g-tour .big { width: 86px; }
.dd.inline { display: inline-block; margin: 0 0 4px 8px; }
.g-spark { width: 210px; }
.g-spark .items { padding-left: 12px; }
.g-filter { width: 148px; }
.g-filter .items { padding-left: 12px; }
.g-link { width: 86px; }
.g-link .big { width: 86px; }
.g-text { width: 298px; }
.g-text .items { padding-left: 7px; }
.g-text .big { width: 72px; }
.g-text .big:nth-child(2) { width: 84px; }
.g-text .stack { margin-left: 12px; }
.g-symbol { width: 121px; }
.g-symbol .items { padding-left: 18px; }
.g-symbol .small svg { width: 22px; }
.collapse { display: flex; align-items: flex-end; margin-left: auto; padding: 0 12px 4px; }

/* formula bar */
.formula { display: flex; flex: none; align-items: center; height: 67px; padding: 0 7px; color: #444; }
.namebox, .fxbox, .fbox { display: flex; align-items: center; height: 37px; border: 1px solid #c0c0c0; background: #fdfdfd; }
.namebox { width: 152px; padding: 0 10px 0 7px; font-size: 19px; }
.namebox input { flex: 1; }
.formula .grip { margin: 0 21px 0 20px; }
.fxbox { width: 164px; margin-right: 4px; padding: 0 17px; justify-content: space-between; }
.fx { padding-bottom: 3px; font: italic 26px/30px "Liberation Serif", serif; color: #555; }
.fbox { flex: 1; padding-right: 6px; }
.fbox input { flex: 1; }

/* sheet */
.sheet { display: flex; flex: 1; min-height: 0; }
.grid { display: flex; flex: 1; flex-direction: column; min-width: 0; border-right: 1px solid #999; }
.colheads { display: flex; flex: none; height: 33px; overflow: hidden; border-bottom: 1px solid #999; color: #111; font-size: 22px; line-height: 30px; text-align: center; }
.corner { flex: none; width: 48px; padding: 4px 0 0 19px; border-right: 1px solid #999; }
.col { flex: none; border-right: 1px solid #aaa; }
.col.sel { border-bottom: 2px solid #217346; background: #d2d2d2; color: #217346; }
.body { display: flex; flex: 1; min-height: 0; }
.rowheads { flex: none; width: 48px; overflow: hidden; border-right: 1px solid #999; color: #111; font-size: 21px; text-align: center; }
.row { display: flex; align-items: center; justify-content: center; padding-bottom: 4px; border-bottom: 1px solid #aaa; }
.row.sel { padding-bottom: 2px; border-right: 2px solid #217346; background: #d2d2d2; color: #217346; }
.cells { display: flex; flex: 1; flex-direction: column; min-width: 0; overflow: hidden; background: #fff; color: #000; }
h1 { flex: none; width: 1276px; height: 61px; margin: 0; padding-left: 13px; background: #2f5597; color: #fff; font-size: 36px; line-height: 62px; }
.steps { display: grid; flex: none; grid-template-columns: 302px 304px 332px 260px; height: 271px; padding: 29px 0 0 11px; }
.step { display: flex; gap: 19px; }
.step:nth-child(2) { gap: 9px; }
.step:nth-child(3) { gap: 12px; }
.num { flex: none; width: 59px; height: 59px; border-radius: 50%; background: #217346; color: #fff; font-size: 32px; line-height: 58px; text-align: center; }
.step:nth-child(n + 3) .num { width: 56px; }
.step:nth-child(4) .num { margin-top: 3px; }
.step p { margin: 7px 0 0; font-size: 20px; line-height: 33px; white-space: nowrap; }
.quiz { display: flex; flex-direction: column; }
.quiz p { margin: 19px 0 0 2px; color: #595959; }
.quiz label { margin: 34px 0 0 4px; font-size: 22px; line-height: 32px; }
.quiz input { width: 135px; height: 32px; border: 1px solid #a6a6a6; background: #ff9; }
.data { display: flex; flex: none; gap: 99px; padding-left: 119px; }
.pivot { width: 316px; height: 206px; margin-top: 1px; border-collapse: collapse; table-layout: fixed; font-size: 22px; line-height: 28px; }
.pivot th, .pivot td { height: 33px; padding: 0 5px 3px; text-align: left; }
.pivot th:first-child { width: 137px; padding-right: 0; }
.pivot thead th { height: 39px; padding-top: 5px; padding-bottom: 0; border-bottom: 1px solid #8ea9db; background: #d9e1f2; }
.th { display: flex; align-items: center; justify-content: space-between; }
.th button { display: flex; align-items: center; justify-content: center; width: 25px; height: 25px; border: 1px solid #a0a8b0; background: #fff; }
.pivot td:last-child { padding-right: 5px; font-size: 21px; text-align: right; }
.pivot tfoot td { border-top: 1px solid #8ea9db; background: #d9e1f2; font-weight: bold; }
.selection { position: relative; width: 277px; height: 208px; border: 2px solid #217346; background: #c6c6c6; }
.active { width: 106px; height: 39px; background: #fff; }
.handle { position: absolute; right: -4px; bottom: -4px; width: 8px; height: 8px; border: 1px solid #fff; background: #217346; }
.band { display: flex; flex: none; align-items: center; justify-content: space-between; width: 1276px; height: 89px; margin-top: auto; padding: 11px 38px 0 45px; background: #f2f2f2; }
.go { display: flex; align-items: center; color: #10754b; font-size: 24px; text-decoration: none; }
.go span { height: 57px; padding: 0 15px; border: 2px solid #10754b; background: #fff; line-height: 53px; }
.go svg { position: relative; z-index: 1; margin-right: -2px; }
.go.next svg { margin: 0 0 0 -2px; }
.vscroll { display: flex; flex: none; flex-direction: column; width: 30px; padding: 1px 4px 0 2px; }
.vscroll button, .hscroll button { display: flex; flex: none; align-items: center; justify-content: center; width: 24px; height: 25px; border: 1px solid #ababab; background: #fff; }
.vtrack { flex: 1; background: #dadada; }
.vthumb { height: 38%; border: 1px solid #ababab; background: #fff; }

/* sheet tabs */
.sheettabs { display: flex; flex: none; height: 34px; border-top: 1px solid #999; border-bottom: 1px solid #c3c3c3; background: #e6e6e6; color: #444; font-size: 21px; }
.nav { display: flex; align-items: center; gap: 20px; width: 115px; padding-left: 29px; color: #0e6b3a; }
.nav b { line-height: 20px; padding-bottom: 4px; }
.sheettabs > button { flex: none; width: 48px; margin: 3px 0 4px; padding-bottom: 10px; border-left: 1px solid #999; line-height: 15px; }
.sheettabs > .one { width: 36px; }
.sheettabs > .on { margin: -1px 0 4px; padding-top: 5px; border-bottom: 2px solid #217346; background: #fff; color: #217346; font-weight: 600; }
.sheettabs > .info { width: 144px; padding: 0 2px; margin: 2px 0 3px; border-right: 1px solid #999; color: #111; font-size: 20px; }
.info span { display: block; height: 27px; background: #70ad47; line-height: 18px; }
.plus { align-self: center; margin-left: 36px; }
.hscroll { display: flex; flex: 1; align-items: center; padding: 0 30px 0 72px; }
.hscroll .grip { margin-right: 17px; }
.htrack { flex: 1; height: 25px; background: #dadada; }
.hthumb { width: 95%; height: 25px; border: 1px solid #ababab; background: #fff; }

/* status bar */
.status { display: flex; flex: none; align-items: center; height: 32px; padding: 0 11px 4px 10px; background: #f3f3f3; }
.views { display: flex; gap: 40px; margin-left: auto; }
.zoom { margin: 0 18px 0 28px; }
.pct { color: #b1b1b1; font-size: 19px; }

/* taskbar */
.taskbar { display: flex; flex: none; height: 60px; background: #060a12; color: #fff; }
.start { display: flex; align-items: center; justify-content: center; width: 72px; }
.search { display: flex; align-items: center; width: 516px; padding: 0 22px 1px 13px; border-top: 1px solid #bbb; background: #f2f2f2; color: #333; font-size: 22px; }
.search input { flex: 1; padding: 0 0 3px 13px; }
.search input::placeholder { color: #333; opacity: 1; }
.taskview { width: 83px; padding-left: 23px; }
.app-btn { display: flex; align-items: center; gap: 5px; height: 60px; padding: 2px 8px 0 9px; border-bottom: 3px solid #76b9ed; white-space: nowrap; }
.folder { gap: 12px; width: 228px; padding-left: 15px; }
.mail { padding: 0 27px 0 26px; }
.edge { width: 228px; }
.excel { width: 240px; margin-left: 8px; padding-left: 14px; background: #3b3e45; }
.tray { display: flex; align-items: center; gap: 14px; margin-left: auto; padding-right: 6px; }
.tray b { margin-left: -4px; font-size: 20px; font-weight: 500; }
.tray .ime { margin-left: 8px; padding: 0 1px; background: #fff; color: #000; }
.clock { display: flex; flex-direction: column; margin: 0 23px 0 21px; font-size: 19px; line-height: 28px; text-align: center; }
.notice { position: relative; height: 60px; margin-left: 25px; padding: 18px 30px 0 0; border-right: 1px solid #555; }
.notice span { position: absolute; left: 11px; top: 29px; width: 24px; height: 24px; border: 1px solid #999; border-radius: 50%; background: #222; font-size: 18px; font-weight: bold; line-height: 22px; text-align: center; }

/* dialog */
.dialog { position: absolute; left: 1263px; top: 345px; width: 626px; border: 1px solid #6b6b6b; background: #f0f0f0; box-shadow: 0 6px 22px rgba(0, 0, 0, .35); color: #000; }
.dtitle { display: flex; align-items: center; height: 44px; padding: 0 27px 1px 11px; background: #fff; }
.dtitle span { flex: 1; }
.dtitle button:nth-child(2) { margin-right: 58px; font-size: 20px; }
.dbody { display: flex; flex-direction: column; padding: 12px 10px 13px; }
.legend { display: flex; align-items: center; gap: 6px; }
.legend::after { flex: 1; height: 1px; background: #dcdcdc; content: ""; }
.legend.second { margin-top: 19px; }
.legend.third { margin-top: 16px; }
.opt { display: flex; align-items: center; gap: 6px; margin: 14px 0 0 15px; line-height: 24px; }
.opt.tight { margin-top: 12px; }
.opt input { width: 20px; height: 20px; border: 1px solid #333; border-radius: 50%; background: #fff; appearance: none; }
.opt input[type="checkbox"] { border-radius: 0; }
.opt input:checked { background: radial-gradient(circle, #333 0 5px, #fff 6px); }
.off { margin-top: 9px; color: #6d6d6d; }
.off input { border-color: #bbb; }
.field { display: flex; align-items: center; gap: 16px; margin: 10px 0 9px 71px; }
.field + .opt { margin-top: 0; }
.loc { margin-bottom: 0; }
.ref { position: relative; display: flex; flex: 1; height: 36px; border: 1px solid #ababab; background: #fff; font-size: 19px; }
.ref input { flex: 1; padding: 0 5px 7px; }
.caret { position: absolute; left: 5px; top: 3px; width: 1px; height: 24px; background: #000; }
.ref button { display: flex; align-items: center; justify-content: center; width: 32px; border: 1px solid #ababab; background: #e1e1e1; }
.ref .hot { border-color: #0078d7; background: #e5f1fb; }
.connect { align-self: flex-start; width: 137px; height: 41px; margin: 9px 0 7px 71px; padding-bottom: 2px; border: 1px solid #ababab; background: #e1e1e1; color: #777; }
.conn { margin-left: 71px; color: #6d6d6d; }
.actions { display: flex; justify-content: flex-end; gap: 16px; margin: 17px 1px 0 0; }
.actions button { width: 124px; height: 41px; padding-bottom: 1px; border: 1px solid #ababab; background: #e1e1e1; }
.actions .ok { border: 2px solid #0078d7; }
.resize { position: absolute; right: 0; bottom: 0; }

/* watermark */
.mark { position: absolute; right: 118px; bottom: 46px; width: 384px; color: #fff; opacity: .85; pointer-events: none; }
.logo { display: flex; align-items: flex-end; height: 133px; padding-bottom: 3px; -webkit-text-stroke: 3px #bbb; paint-order: stroke fill; }
.bai { width: 129px; font: bold 88px/74px "Liberation Sans", sans-serif; }
.paw { position: relative; width: 118px; }
.paw span { position: absolute; left: 22px; bottom: 6px; font: 56px/56px "Liberation Sans", sans-serif; }
.jy { font: 900 66px/74px "Noto Sans CJK SC", sans-serif; }
.url { font-size: 44px; line-height: 60px; text-shadow: 0 0 3px #888; }
</style>
